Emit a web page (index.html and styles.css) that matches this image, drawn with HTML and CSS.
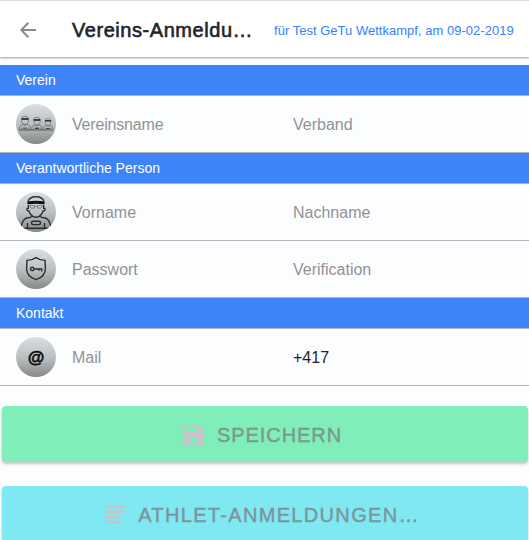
FILE: index.html
```html
<!DOCTYPE html>
<html lang="de">
<head>
<meta charset="utf-8">
<title>Vereins-Anmeldung</title>
<link rel="stylesheet" href="styles.css">
</head>
<body>
<header class="toolbar">
  <svg class="back" viewBox="0 0 16 16"><path d="M8.3 .8 1.3 8l7 7.2M1.3 8H16"/></svg>
  <h1 class="title">Vereins-Anmeldu…</h1>
  <span class="event">für Test GeTu Wettkampf, am 09-02-2019</span>
</header>
<main>
  <div class="divider">Verein</div>
  <div class="item">
    <span class="avatar"><svg viewBox="0 0 40 40">
      <defs><g id="member"><path d="M-5.5 13v-2q0-3 3.5-3.8L0 8.2l2-1q3.5.8 3.5 3.8v2zM-3.3 2.3v1.5Q-3 7 0 7t3.3-3.2V2.3M-3.2 1Q-3-2 0-2t3.2 3M-3.5 10.5V13M3.5 10.5V13"/><path class="solid" d="M-3.5.2h7v1.8h-7z"/><path class="solid" d="M-2 10.5h4v1h-4z"/></g></defs>
      <g class="thin"><use href="#member" transform="translate(9 14) scale(1.05 .92)"/><use href="#member" transform="translate(21 15) scale(.98 .84)"/><use href="#member" transform="translate(32 16) scale(.88 .77)"/><path d="M3 26h34"/></g>
    </svg></span>
    <span class="field narrow">Vereinsname</span><span class="field">Verband</span>
  </div>
  <div class="divider">Verantwortliche Person</div>
  <div class="item">
    <span class="avatar"><svg viewBox="0 0 40 40">
      <path d="M12 12V9.8Q13 4.7 20 4.7t8 5.1V12M12.3 13v3.2q-1.8-.2-1.3 1.5.4 1.4 1.9 1.3Q15 25.2 20 25.3q5-.1 7.1-6.3 1.5.1 1.9-1.3.5-1.7-1.3-1.5V13M16.4 23.3v.9q-1.5 1.2-5.7 1.8Q6 27.5 5 36.2h30Q34 27.5 29.3 26q-4.2-.6-5.7-1.8v-.9M11.5 31v5M28.5 31v5"/>
      <path class="solid" d="M12 9.4q8-1.4 16 0v2.8q-8-1-16 0z"/>
      <path class="fine" d="M13.5 13.6h5v2.5h-3.7zM21.5 13.6h5l-1.3 2.5h-3.7zM18.5 14.3h3"/>
      <rect x="15.5" y="29.2" width="9" height="3.4" rx="1.5"/>
    </svg></span>
    <span class="field">Vorname</span><span class="field">Nachname</span>
  </div>
  <div class="item">
    <span class="avatar"><svg viewBox="0 0 40 40">
      <path d="M20 8.7q-3.8 2.6-9 2.7l-.4 8q0 8 9.4 11.3 9.4-3.3 9.4-11.3l-.4-8Q23.8 11.3 20 8.7z"/><circle cx="16.2" cy="20" r="1.7"/><path d="M18 20h7.7v2.4M23 20v1.7"/>
    </svg></span>
    <span class="field">Passwort</span><span class="field">Verification</span>
  </div>
  <div class="divider">Kontakt</div>
  <div class="item">
    <span class="avatar at"><b>@</b></span>
    <span class="field">Mail</span><span class="field value">+417</span>
  </div>
  <div class="button save">
    <svg class="disk" viewBox="0 0 21 21"><path fill-rule="evenodd" d="M2 0h14.5L21 4.5V19q0 2-2 2H2q-2 0-2-2V2Q0 0 2 0zM2.2 2.3v4.4h11.6V2.3zM10.5 12a3.4 3.4 0 1 0 0 6.8 3.4 3.4 0 0 0 0-6.8z"/></svg>
    <span>SPEICHERN</span>
  </div>
  <div class="button athletes">
    <svg class="list" viewBox="0 0 20 20"><path d="M0 0h20v3H0zM0 5.2h18v3H0zM0 10.6h14.5v2.8H0zM0 15.8h16v3H0z"/></svg>
    <span>ATHLET-ANMELDUNGEN…</span>
  </div>
</main>
</body>
</html>
```
FILE: styles.css
```css
* { box-sizing: border-box; }
body {
  margin: 0;
  height: 540px;
  overflow: hidden;
  background: #fcfdff;
  font-family: "Liberation Sans", Arial, sans-serif;
  color: #222428;
}
.toolbar {
  height: 57px;
  margin-bottom: 8px;
  display: flex;
  align-items: center;
  padding: 2px 14px 0 20px;
  border-top: 1px solid #dadae0;
  background: #fff;
  box-shadow: 0 1px 2px rgba(0, 0, 0, .38);
  white-space: nowrap;
}
.back { width: 16px; height: 16px; margin-right: 36px; fill: none; stroke: #8b8b8b; stroke-width: 2; }
.title {
  width: 202px;
  margin: 0;
  font-size: 20px;
  font-weight: 400;
  line-height: 24px;
  letter-spacing: .55px;
  -webkit-text-stroke: .6px #222428;
}
.event { font-size: 13px; color: #3880ff; letter-spacing: .02px; }
.divider {
  height: 31px;
  padding-left: 16px;
  border-bottom: 1px solid #aab4cc;
  background: #3d84fb;
  color: #fff;
  font-size: 14px;
  line-height: 30px;
}
.item {
  height: 57px;
  display: grid;
  grid-template-columns: 40px 205px 1fr;
  column-gap: 16px;
  align-items: center;
  padding-left: 16px;
  border-bottom: 1px solid #b4b4b8;
}
.avatar {
  width: 40px;
  height: 40px;
  overflow: hidden;
  border-radius: 50%;
  background: linear-gradient(#d9dfe2, #b9bdbe 55%, #878787);
}
.avatar svg { display: block; fill: none; stroke: #2b2e30; stroke-width: 1.4; }
.avatar .thin { stroke: #5c6062; stroke-width: .7; }
.avatar .fine { stroke: #55595b; stroke-width: .6; }
.avatar .solid { fill: #111; stroke: none; }
.avatar .thin .solid { fill: #333; }
.at { display: flex; align-items: center; justify-content: center; }
.at b {
  width: 17px;
  height: 17px;
  border-radius: 50%;
  display: flex;
  align-items: center;
  justify-content: center;
  font-size: 17px;
  line-height: 15px;
  -webkit-text-stroke: .5px #080808;
  color: #080808;
}
.field { font-size: 16px; line-height: 20px; padding-top: 1px; color: #929294; white-space: nowrap; }
.narrow { letter-spacing: -.18px; }
.value { color: #222428; }
.button {
  height: 56px;
  margin: 20px 1px 0 2px;
  display: flex;
  align-items: center;
  justify-content: center;
  padding: 2px 5px 0 0;
  border-radius: 4px;
  box-shadow: 0 2px 3px rgba(0, 0, 0, .23);
  font-size: 20px;
  letter-spacing: .95px;
  -webkit-text-stroke: .4px currentColor;
  white-space: nowrap;
}
.save { background: #80eeb9; color: #7c988b; }
.athletes { margin-top: 24px; background: #7fe8f2; color: #7c959a; letter-spacing: 1.33px; }
.button svg { flex: none; fill: #c5c5ca; stroke: none; }
.disk { width: 21px; height: 21px; margin-right: 13px; }
.list { width: 20px; height: 20px; margin-right: 13px; }
```
